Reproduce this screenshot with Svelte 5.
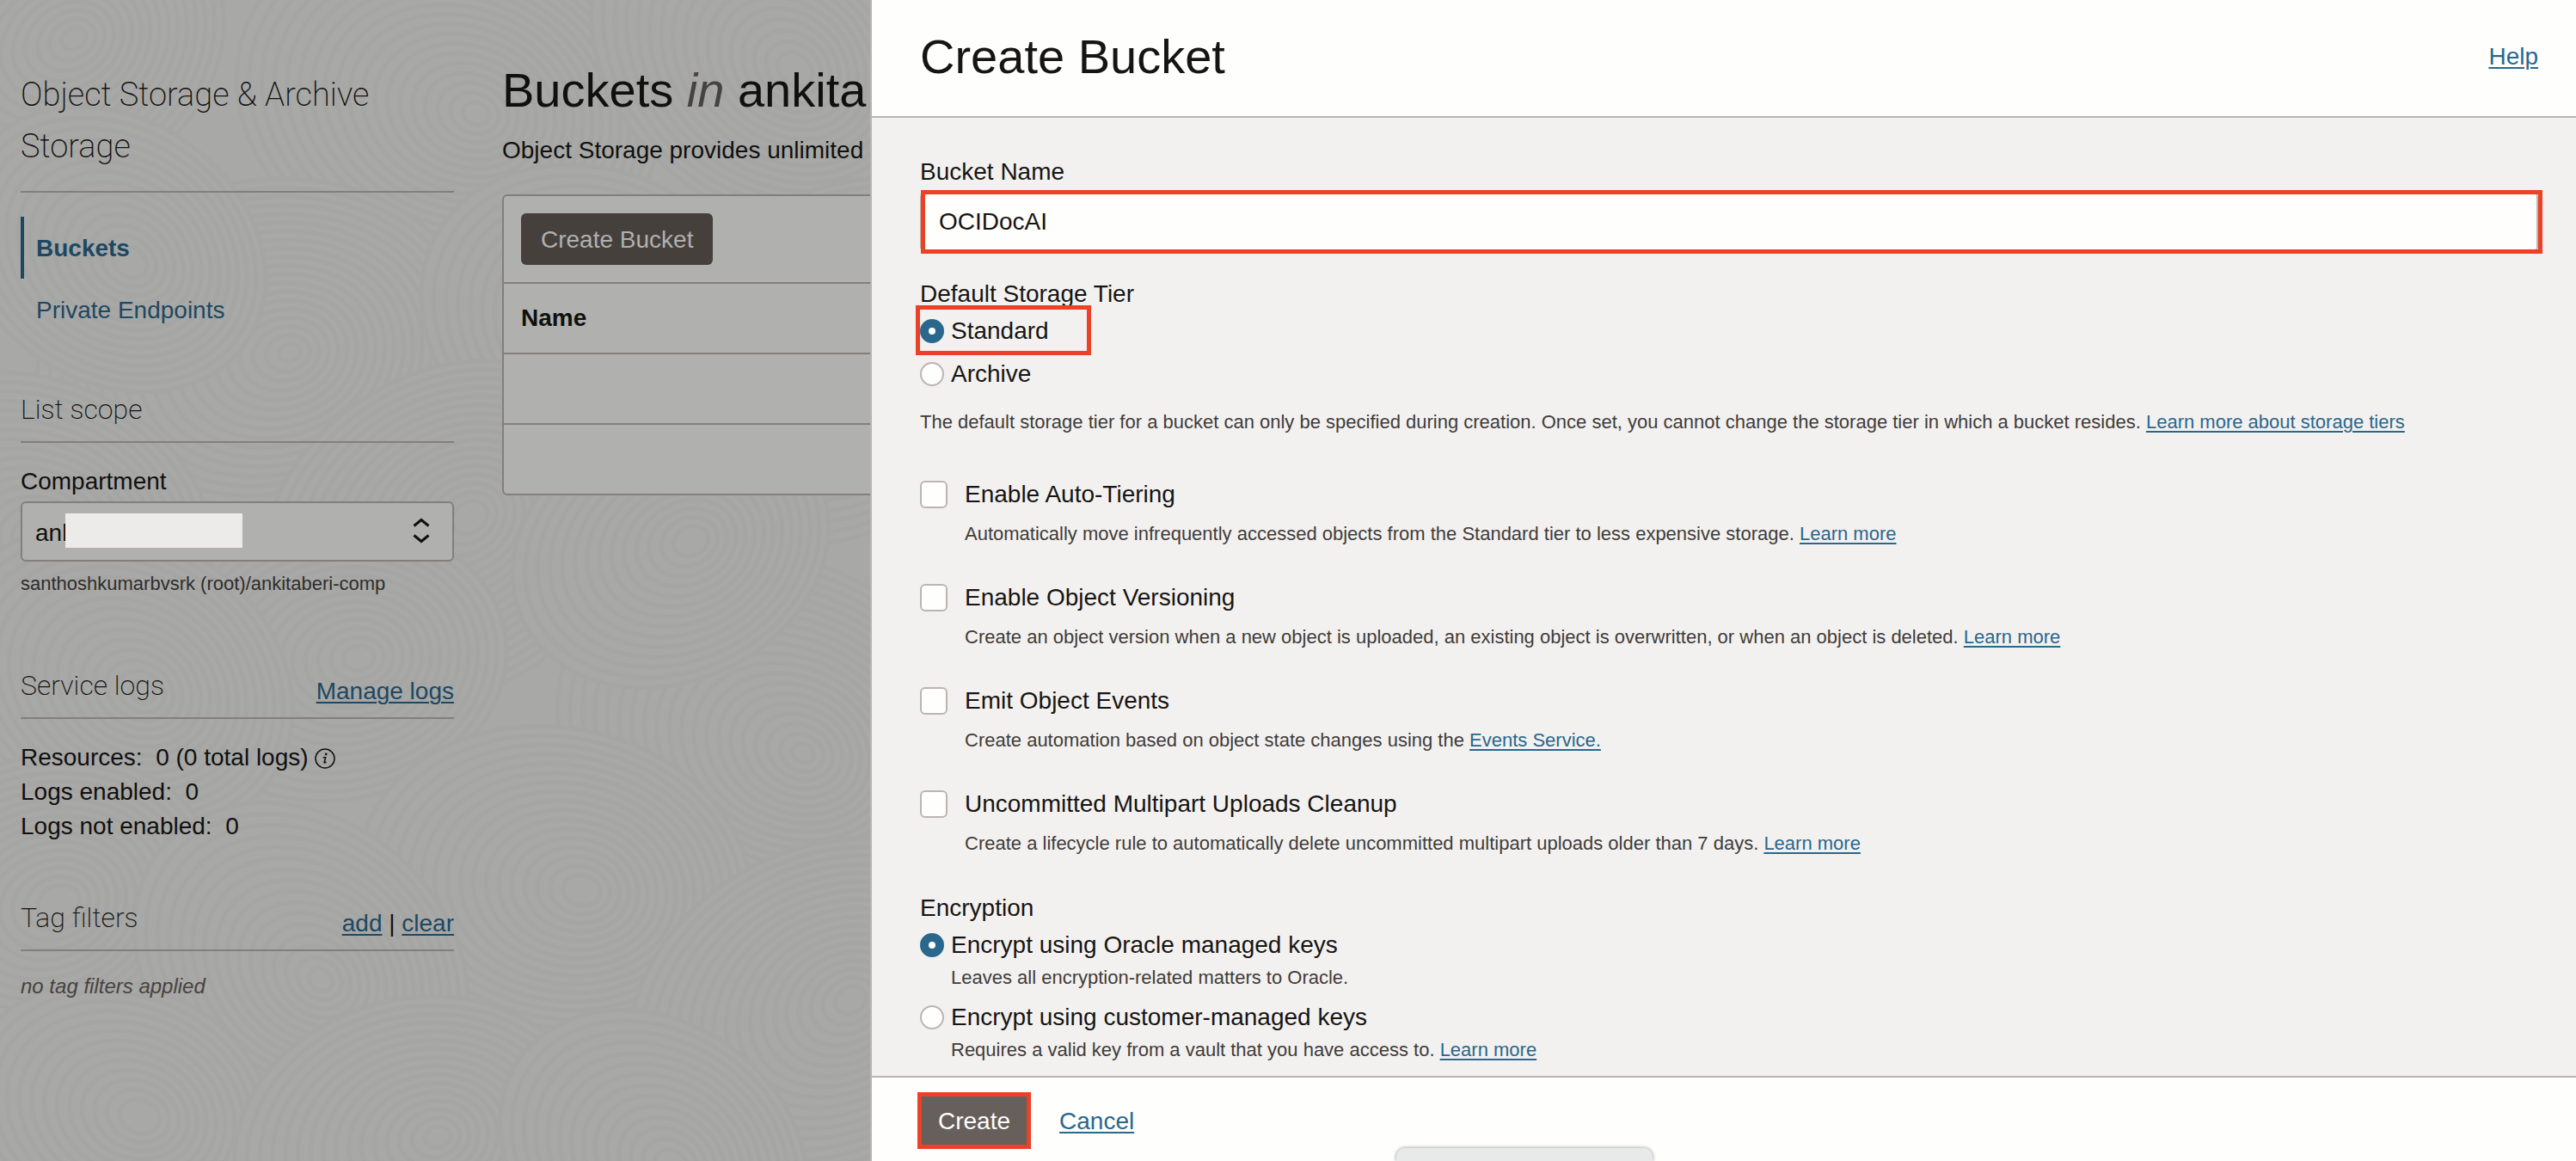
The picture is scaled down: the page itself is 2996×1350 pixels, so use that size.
<script lang="ts">
  const options = [
    {
      id: 'tiering',
      label: 'Enable Auto-Tiering',
      text: 'Automatically move infrequently accessed objects from the Standard tier to less expensive storage.',
      link: 'Learn more',
    },
    {
      id: 'versioning',
      label: 'Enable Object Versioning',
      text: 'Create an object version when a new object is uploaded, an existing object is overwritten, or when an object is deleted.',
      link: 'Learn more',
    },
    {
      id: 'events',
      label: 'Emit Object Events',
      text: 'Create automation based on object state changes using the',
      link: 'Events Service.',
    },
    {
      id: 'cleanup',
      label: 'Uncommitted Multipart Uploads Cleanup',
      text: 'Create a lifecycle rule to automatically delete uncommitted multipart uploads older than 7 days.',
      link: 'Learn more',
    },
  ];

  let bucketName = $state('OCIDocAI');
  let tier = $state('standard');
  let encryption = $state('oracle');

  // Ring clusters of the page's contour texture: centre, radius and tilt.
  const clusters = [
    [520, 120, 250, 20], [60, 60, 210, -30], [900, 60, 230, 40], [300, 420, 260, -15],
    [700, 380, 220, 30], [980, 420, 240, -40], [130, 290, 190, 35], [20, 620, 230, 15],
    [520, 620, 230, -35], [900, 860, 260, 25], [390, 770, 200, -10], [140, 790, 210, 30],
    [780, 640, 190, -25], [645, 1030, 230, 10], [40, 1060, 220, -20], [350, 1120, 210, 40],
    [960, 1180, 240, -30], [140, 1290, 180, 20], [480, 1330, 210, -15], [760, 1340, 190, 35],
  ];
  const rings = (radius: number) =>
    Array.from({ length: Math.floor(radius / 13) }, (_, i) => radius - i * 13);
</script>

<div class="console">
  <svg class="texture" viewBox="0 0 1012 1350" preserveAspectRatio="xMinYMin slice" aria-hidden="true">
    {#each clusters as [x, y, radius, tilt]}
      <g transform="translate({x} {y}) rotate({tilt})">
        {#each rings(radius) as r, i}
          <ellipse cx={i * 2} rx={r} ry={r * 0.8} />
        {/each}
      </g>
    {/each}
  </svg>

  <aside class="sidebar">
    <h2 class="service">Object Storage &amp; Archive Storage</h2>
    <nav>
      <a class="current" href="#buckets">Buckets</a>
      <a href="#endpoints">Private Endpoints</a>
    </nav>

    <section class="scope">
      <div class="section-head"><h3>List scope</h3></div>
      <label for="compartment">Compartment</label>
      <div class="select">
        <select id="compartment">
          <option>ankitaberi-comp</option>
        </select>
        <span class="mask"></span>
        <svg class="chevrons" viewBox="0 0 20 30" aria-hidden="true">
          <path d="M1.5 9.5 10 2.5l8.500 7M1.500 20.500 10 27.500l8.500-7" />
        </svg>
      </div>
      <p class="path">santhoshkumarbvsrk (root)/ankitaberi-comp</p>
    </section>

    <section class="logs">
      <div class="section-head">
        <h3>Service logs</h3>
        <a href="#logs">Manage logs</a>
      </div>
      <p>
        Resources: &nbsp;0 (0 total logs)
        <svg class="info" viewBox="0 0 24 24" aria-hidden="true">
          <circle cx="12" cy="12" r="11" />
          <path class="dot" d="M13.200 5.600a1.300 1.300 0 1 1-.1 2.600 1.300 1.300 0 0 1 .1-2.600z" />
          <path d="M9.800 10.800h2.900l-1.600 5.600c-.2.900.6 1 2.300-.6" />
        </svg>
      </p>
      <p>Logs enabled: &nbsp;0</p>
      <p>Logs not enabled: &nbsp;0</p>
    </section>

    <section class="tags">
      <div class="section-head">
        <h3>Tag filters</h3>
        <span><a href="#add">add</a> | <a href="#clear">clear</a></span>
      </div>
      <p class="none">no tag filters applied</p>
    </section>
  </aside>

  <main>
    <h1>Buckets <em>in</em> ankita</h1>
    <p>Object Storage provides unlimited</p>
    <div class="panel">
      <div class="toolbar"><button type="button">Create Bucket</button></div>
      <table>
        <thead><tr><th scope="col">Name</th></tr></thead>
        <tbody>
          <tr><td></td></tr>
          <tr><td></td></tr>
        </tbody>
      </table>
    </div>
  </main>
</div>

<form class="drawer" aria-label="Create Bucket" onsubmit={(e) => e.preventDefault()}>
  <header>
    <h2>Create Bucket</h2>
    <a href="#help">Help</a>
  </header>

  <div class="fields">
    <label for="name">Bucket Name</label>
    <div class="name-field">
      <input id="name" type="text" bind:value={bucketName} />
    </div>

    <fieldset class="tier">
      <legend>Default Storage Tier</legend>
      <label class="radio marked">
        <input type="radio" name="tier" value="standard" bind:group={tier} />Standard
      </label>
      <label class="radio">
        <input type="radio" name="tier" value="archive" bind:group={tier} />Archive
      </label>
    </fieldset>
    <p class="hint">
      The default storage tier for a bucket can only be specified during creation. Once set, you
      cannot change the storage tier in which a bucket resides.
      <a href="#tiers">Learn more about storage tiers</a>
    </p>

    <div class="options">
      {#each options as option (option.id)}
        <div class="option">
          <input type="checkbox" id={option.id} />
          <label for={option.id}>{option.label}</label>
          <p class="hint">{option.text} <a href="#{option.id}">{option.link}</a></p>
        </div>
      {/each}
    </div>

    <fieldset class="encryption">
      <legend>Encryption</legend>
      <label class="radio">
        <input type="radio" name="encryption" value="oracle" bind:group={encryption} />Encrypt using
        Oracle managed keys
      </label>
      <p class="hint">Leaves all encryption-related matters to Oracle.</p>
      <label class="radio">
        <input type="radio" name="encryption" value="customer" bind:group={encryption} />Encrypt using
        customer-managed keys
      </label>
      <p class="hint">
        Requires a valid key from a vault that you have access to. <a href="#vault">Learn more</a>
      </p>
    </fieldset>
  </div>

  <footer>
    <span class="create"><button type="submit">Create</button></span>
    <a href="#cancel">Cancel</a>
    <span class="handle"></span>
  </footer>
</form>

<style>
  :global(body) {
    background: #a8a8a6;
    color: #161513;
    font: 28px/40px 'Liberation Sans', Arial, sans-serif;
  }
  h1, h2, h3, p { margin: 0; font-weight: 400; }
  button, input, select { font: inherit; color: inherit; }
  a {
    color: #2a678c;
    text-decoration-thickness: 2px;
    text-underline-offset: 3px;
  }

  .console {
    position: relative;
    display: flex;
    gap: 56px;
    box-sizing: border-box;
    height: 100vh;
    padding: 0 24px;
    overflow: hidden;
    color: #10100f;
  }
  .console a { color: #1d4862; }
  .texture {
    position: absolute;
    inset: 0;
    z-index: -1;
    width: 1012px;
    height: 100%;
  }
  .texture ellipse { fill: #a8a8a6; stroke: #a5a5a4; stroke-width: 5; }

  .sidebar { flex: 0 0 504px; }
  .service {
    padding: 80px 0 22px;
    border-bottom: 2px solid #837f7b;
    font: 200 38px/60px Roboto, sans-serif;
  }
  nav { display: grid; padding-top: 28px; }
  nav a { padding: 17px 0 15px 18px; text-decoration: none; }
  nav .current {
    padding-left: 14px;
    border-left: 4px solid #1d4862;
    font-weight: 700;
  }
  .section-head {
    display: flex;
    align-items: flex-end;
    justify-content: space-between;
    padding-bottom: 10px;
    border-bottom: 2px solid #837f7b;
  }
  .section-head h3 { padding-bottom: 7px; font: 200 32px/40px Roboto, sans-serif; }
  .scope { padding-top: 60px; }
  .scope label { display: block; padding-top: 25px; }
  .select { position: relative; margin-top: 3px; }
  select {
    display: block;
    box-sizing: border-box;
    width: 100%;
    height: 70px;
    padding: 4px 15px 0;
    border: 2px solid #837f7b;
    border-radius: 6px;
    background: #b0b0ae;
    appearance: none;
  }
  .mask {
    position: absolute;
    top: 14px;
    left: 52px;
    width: 206px;
    height: 40px;
    background: #ecebe9;
  }
  .chevrons {
    position: absolute;
    top: 19px;
    right: 28px;
    width: 20px;
    height: 30px;
    fill: none;
    stroke: #10100f;
    stroke-width: 3;
  }
  .path { padding-top: 10px; color: #2f2d2c; font-size: 22px; line-height: 32px; }
  .logs { padding-top: 82px; }
  .logs .section-head { margin-bottom: 25px; }
  .info {
    width: 24px;
    height: 24px;
    vertical-align: -4px;
    fill: none;
    stroke: #10100f;
    stroke-width: 1.500;
  }
  .info .dot { fill: #10100f; stroke: none; }
  .tags { padding-top: 66px; }
  .none { padding-top: 21px; color: #474240; font-size: 24px; font-style: italic; }

  main { flex: 1; min-width: 0; padding-top: 73px; }
  h1 { font-size: 56px; line-height: 64px; }
  h1 em { color: #474240; }
  main > p { padding-top: 18px; }
  .panel {
    margin-top: 31px;
    border: 2px solid #837f7b;
    border-radius: 6px;
    background: #b0b0ae;
  }
  .toolbar { padding: 20px; }
  button {
    display: block;
    height: 60px;
    padding-top: 2px;
    border: 0;
    border-radius: 6px;
    cursor: pointer;
  }
  .toolbar button { padding: 2px 23px 0; background: #46403d; color: #b0b0ae; }
  table { width: 100%; border-spacing: 0; }
  th, td {
    box-sizing: border-box;
    height: 82px;
    padding: 0 20px;
    border-top: 2px solid #837f7b;
    text-align: left;
  }

  .drawer {
    position: fixed;
    inset: 0 0 0 1012px;
    display: flex;
    flex-direction: column;
    border-left: 2px solid #bbb5b0;
    background: #f3f1f0;
  }
  header {
    display: flex;
    align-items: center;
    justify-content: space-between;
    padding: 34px 44px 37px 56px;
    border-bottom: 2px solid #bbb5b0;
    background: #fefefd;
  }
  header h2 { font-size: 56px; line-height: 64px; }
  .fields { flex: 1; min-height: 0; padding: 43px 44px 0 56px; overflow: hidden; }
  .fields > label { display: block; }
  fieldset { margin: 0; padding: 3px 0 0; border: 0; }
  legend { padding: 0; }

  /* Call-outs that mark the steps of the walkthrough */
  .name-field { position: relative; margin-top: 3px; }
  .name-field::after, .marked::after, .create::after {
    content: '';
    position: absolute;
    border: 5px solid #ec4126;
    pointer-events: none;
  }
  .name-field::after { inset: -2px -5px -2px 1px; }
  .marked::after { top: -10px; left: -5px; width: 194px; height: 48px; }
  .create::after { inset: -3px; }

  input[type='text'] {
    display: block;
    box-sizing: border-box;
    width: 100%;
    height: 70px;
    padding: 0 20px;
    border: 2px solid #bbb5b0;
    border-radius: 6px;
    background: #fefefd;
  }
  .tier { margin-top: 29px; }
  .radio { position: relative; display: flex; align-items: center; gap: 8px; }
  .tier .radio + .radio { margin-top: 10px; }
  input[type='radio'], input[type='checkbox'] {
    box-sizing: border-box;
    flex: none;
    width: 28px;
    height: 28px;
    margin: 0;
    border: 2px solid #bbb5b0;
    border-radius: 50%;
    background: #fefefd;
    appearance: none;
  }
  input[type='radio']:checked { border: 10px solid #2a678c; }
  input[type='checkbox'] { width: 32px; height: 32px; border-radius: 6px; }
  .hint { color: #403c39; font-size: 22px; line-height: 32px; }
  .tier + .hint { padding-top: 20px; }
  .options { display: grid; gap: 38px; padding-top: 48px; }
  .option { display: grid; grid-template-columns: 32px 1fr; align-items: center; column-gap: 20px; }
  .option .hint { grid-column: 2; padding-top: 10px; }
  .encryption { margin-top: 39px; }
  .encryption .hint { padding: 2px 0 10px 36px; }

  footer {
    position: relative;
    display: flex;
    align-items: center;
    gap: 36px;
    padding: 20px 56px 17px;
    border-top: 2px solid #bbb5b0;
    background: #fefefd;
  }
  footer a { padding-top: 2px; }
  .create { position: relative; }
  .create button { padding: 2px 21px 0; background: #665f5b; color: #fefefd; }
  .handle {
    position: absolute;
    bottom: 0;
    left: 610px;
    width: 298px;
    height: 15px;
    border-radius: 10px 10px 0 0;
    background: #e8eaea;
    box-shadow: 0 0 4px #8c8c8c;
  }
</style>
